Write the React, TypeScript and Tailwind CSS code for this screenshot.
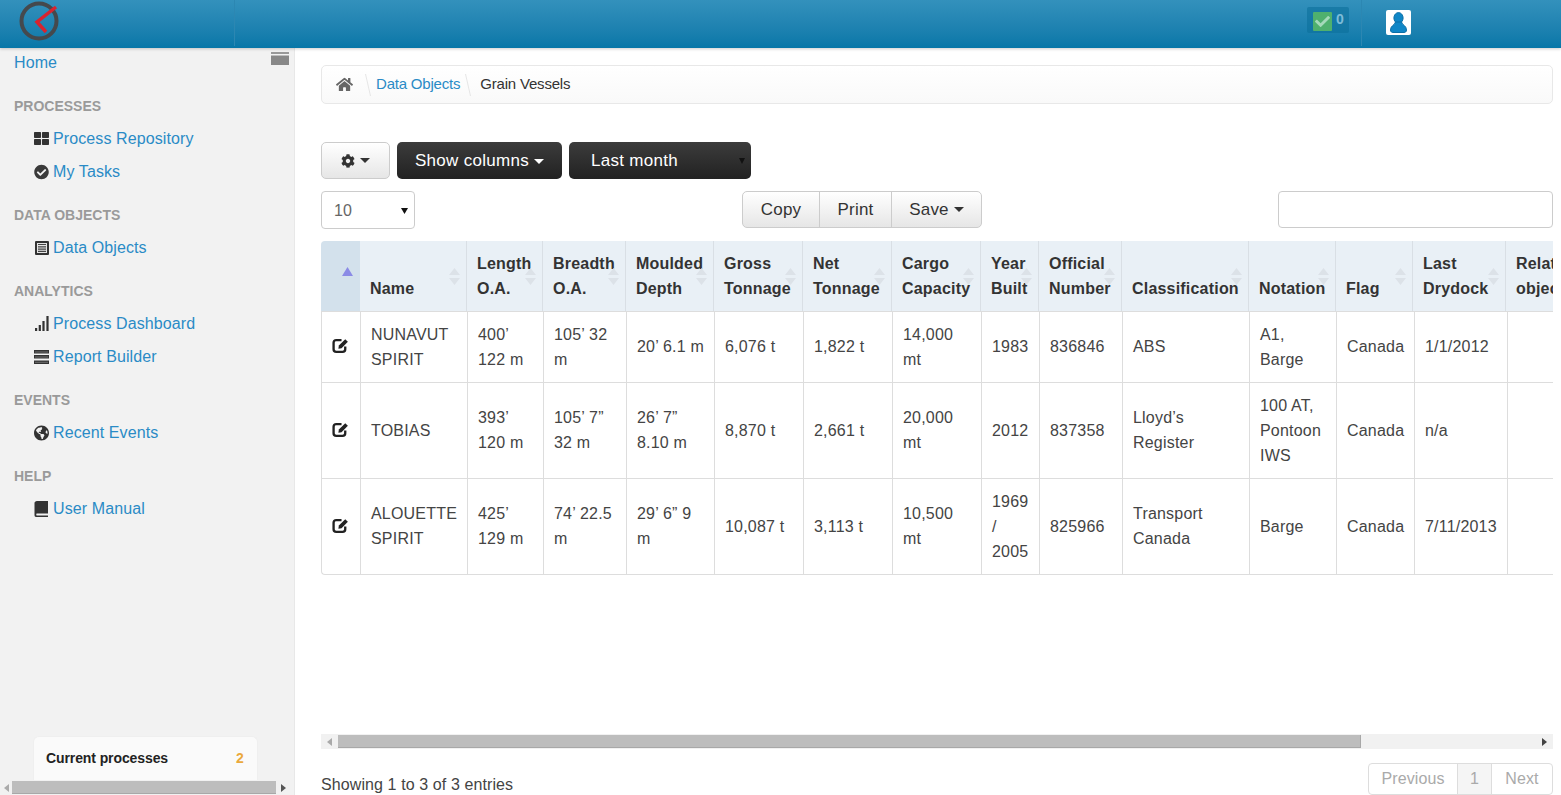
import React from "react";
import { FaThLarge, FaCheckCircle, FaGlobeAmericas, FaHome, FaCog, FaCheck } from "react-icons/fa";

const headWidths = [39, 106, 76, 83, 88, 89, 89, 89, 58, 83, 127, 87, 77, 93, 120];
const bodyWidths = [39, 107, 76, 83, 88, 89, 89, 89, 58, 83, 127, 87, 78, 93, 120];
const heads = ["Name", "Length\nO.A.", "Breadth\nO.A.", "Moulded\nDepth", "Gross\nTonnage", "Net\nTonnage", "Cargo\nCapacity", "Year\nBuilt", "Official\nNumber", "Classification", "Notation", "Flag", "Last\nDrydock", "Related\nobjects"];
const rows = [
  { h: "h-[71px]", c: ["NUNAVUT\nSPIRIT", "400’\n122 m", "105’ 32\nm", "20’ 6.1 m", "6,076 t", "1,822 t", "14,000\nmt", "1983", "836846", "ABS", "A1,\nBarge", "Canada", "1/1/2012", ""] },
  { h: "h-[96px]", c: ["TOBIAS", "393’\n120 m", "105’ 7”\n32 m", "26’ 7”\n8.10 m", "8,870 t", "2,661 t", "20,000\nmt", "2012", "837358", "Lloyd’s\nRegister", "100 AT,\nPontoon\nIWS", "Canada", "n/a", ""] },
  { h: "h-[97px]", c: ["ALOUETTE\nSPIRIT", "425’\n129 m", "74’ 22.5\nm", "29’ 6” 9\nm", "10,087 t", "3,113 t", "10,500\nmt", "1969\n/\n2005", "825966", "Transport\nCanada", "Barge", "Canada", "7/11/2013", ""] },
];

function ListAltIcon() {
  return (
    <svg width="14" height="14" viewBox="0 0 14 14">
      <rect width="14" height="14" rx="1" fill="#333" />
      <rect x="2" y="2" width="10" height="10" fill="#e4e4e4" />
      <path d="M3 3.5 H11 M3 5.8 H11 M3 8.1 H11 M3 10.4 H11" stroke="#444" strokeWidth="1.2" />
    </svg>
  );
}
function StackIcon() {
  return (
    <svg width="15" height="14" viewBox="0 0 15 14">
      <path d="M0 0 H15 V3.4 H0 Z M0 5 H15 V8.6 H0 Z M0 10.4 H15 V14 H0 Z" fill="#333" />
      <path d="M1 2 H14 M1 7 H14 M1 12.3 H14" stroke="#999" strokeWidth="0.6" />
    </svg>
  );
}
function BookIcon() {
  return (
    <svg width="15" height="16" viewBox="0 0 15 16">
      <path d="M3 0 H14 V12.5 H3 C2 12.5 2 14.5 3 14.5 H14 V16 H2 C1 16 0.5 15 0.5 14 V2 C0.5 1 1.5 0 3 0 Z" fill="#333" />
    </svg>
  );
}
function EditIcon() {
  return (
    <svg width="18" height="17" viewBox="0 0 17 16" className="inline-block -translate-y-[2px]">
      <path d="M9 3 H4 Q1.5 3 1.5 5.5 V11.5 Q1.5 14 4 14 H10 Q12.5 14 12.5 11.5 V9" fill="none" stroke="#222" strokeWidth="2.2" />
      <path d="M6 11 L6.5 8 L12.5 2 L15 4.5 L9 10.5 Z" fill="#222" />
    </svg>
  );
}

const sections = [
  { t: "PROCESSES", items: [[<FaThLarge />, "Process Repository"], [<FaCheckCircle className="text-[#3a3a3a] text-[16px]" />, "My Tasks"]] },
  { t: "DATA OBJECTS", items: [[<ListAltIcon />, "Data Objects"]] },
  { t: "ANALYTICS", items: [[<svg width="14" height="15" viewBox="0 0 14 15"><path d="M0 12 H2.2 V15 H0 Z M3.7 9 H5.9 V15 H3.7 Z M7.4 5 H9.6 V15 H7.4 Z M11.4 0 H13.6 V15 H11.4 Z" fill="#333" /></svg>, "Process Dashboard"], [<StackIcon />, "Report Builder"]] },
  { t: "EVENTS", items: [[<FaGlobeAmericas className="text-[16px]" />, "Recent Events"]] },
  { t: "HELP", items: [[<BookIcon />, "User Manual"]] },
] as const;

function Sort() {
  return (
    <svg width="11" height="17" viewBox="0 0 11 17" className="absolute right-[6px] top-[27px]">
      <path d="M5.5 0 L11 7 H0 Z M5.5 17 L11 10 H0 Z" fill="#dce2e8" />
    </svg>
  );
}

function Caret({ color = "currentColor" }: { color?: string }) {
  return (
    <svg width="10" height="5" viewBox="0 0 10 5" className="inline-block ml-[5px] align-middle">
      <path d="M0 0 H10 L5 5 Z" fill={color} />
    </svg>
  );
}

function Arrow({ dir, color }: { dir: "l" | "r"; color: string }) {
  return (
    <svg width="5" height="8" viewBox="0 0 5 8">
      <path d={dir === "l" ? "M5 0 V8 L0 4 Z" : "M0 0 V8 L5 4 Z"} fill={color} />
    </svg>
  );
}

function Crumb() {
  return (
    <svg width="6" height="24" viewBox="0 0 6 24" className="shrink-0">
      <path d="M0.5 1 L5.5 23" stroke="#e6e6e6" strokeWidth="1" fill="none" />
    </svg>
  );
}

export default function App() {
  return (
    <div className="h-[795px] overflow-hidden flex flex-col bg-white text-[#444] text-[16px] tracking-[0.1px] font-['Liberation_Sans',Arial,sans-serif]">
      <header className="h-[48px] shrink-0 flex bg-gradient-to-b from-[#3391bc] to-[#0677a8] shadow-[0_1px_3px_rgba(0,0,0,0.2)] z-10">
        <div className="w-[235px] border-r border-[#2c87b2] pl-[19px] pt-[1px] h-[46px]">
          <svg width="42" height="42" viewBox="0 0 42 42">
            <circle cx="20" cy="20" r="17.5" fill="none" stroke="#45494d" strokeWidth="4" />
            <path d="M37 6 L18 21 L27 31" fill="none" stroke="#d9232e" strokeWidth="3.5" />
          </svg>
        </div>
        <div className="flex-1" />
        <div className="w-[42px] h-[26px] mt-[7px] rounded-[2px] bg-[#0c6f9b]/60 flex items-start pl-[6px] pt-[5px]">
          <div className="w-[19px] h-[19px] bg-[#4fb06e] rounded-[1px] flex items-center justify-center text-[#a5d9ba] text-[15px]">
            <FaCheck />
          </div>
          <span className="text-[14px] font-bold text-[#7dbcd9] ml-[4px] leading-[14px]">0</span>
        </div>
        <div className="ml-[12px] border-r border-[#2c87b2] h-[46px] shrink-0" />
        <div className="ml-[24px] mr-[150px] mt-[10px] w-[25px] h-[25px] bg-white rounded-[2px] flex items-center justify-center">
          <svg width="17" height="21" viewBox="0 0 17 21">
            <ellipse cx="8.5" cy="6" rx="4.6" ry="5.4" fill="#0f86c6" stroke="#0b6ea6" strokeWidth="1" />
            <path d="M5.5 10 C5 13 0.5 13.5 0.5 18 C0.5 20 2 20.5 3 20.5 H14 C15 20.5 16.5 20 16.5 18 C16.5 13.5 12 13 11.5 10 Z" fill="#0f86c6" stroke="#0b6ea6" strokeWidth="1" />
          </svg>
        </div>
      </header>

      <div className="flex-1 flex min-h-0">
        <aside className="w-[295px] shrink-0 bg-[#f2f2f2] border-r border-[#e8e8e8] flex flex-col relative">
          <svg width="18" height="13" viewBox="0 0 18 13" className="absolute left-[271px] top-[4px]">
            <rect width="18" height="2" fill="#999" />
            <rect y="3.5" width="18" height="9.5" fill="#888" />
          </svg>
          <a className="pl-[14px] h-[28px] leading-[29px] text-[#2a8bc6]">Home</a>
          <div className="h-[13px]" />
          {sections.map((s) => (
            <div key={s.t} className="mb-[10px]">
              <div className="h-[33px] leading-[35px] pl-[14px] text-[14px] tracking-normal font-bold text-[#9a9a9a]">{s.t}</div>
              {s.items.map(([icon, label]) => (
                <div key={label} className="h-[33px] pl-[34px] flex items-center">
                  <span className="w-[15px] flex justify-center text-[#333] text-[15px]">{icon}</span>
                  <span className="ml-[4px] text-[#2a8bc6]">{label}</span>
                </div>
              ))}
            </div>
          ))}
          <div className="mt-auto ml-[33px] mr-[36px] h-[44px] bg-[#fafafa] border border-b-0 border-[#efefef] rounded-t-[6px] flex justify-between items-center pl-[12px] pr-[13px]">
            <span className="text-[14px] font-bold tracking-[-0.1px] text-[#222]">Current processes</span>
            <span className="text-[14px] font-bold text-[#eaa93c]">2</span>
          </div>
          <div className="h-[15px] w-[290px] bg-[#f1f1f1] flex items-center">
            <span className="w-[12px] flex justify-center"><Arrow dir="l" color="#aaa" /></span>
            <div className="w-[264px] h-[13px] bg-[#bdbdbd] border-b border-[#a8a8a8]" />
            <span className="flex-1 flex justify-center"><Arrow dir="r" color="#555" /></span>
          </div>
        </aside>

        <main className="flex-1 min-w-0 pl-[26px] pr-[8px] flex flex-col">
          <div className="mt-[17px] h-[39px] shrink-0 border border-[#e8e8e8] rounded-[5px] bg-gradient-to-b from-white to-[#f9f9f9] flex items-center pl-[14px] text-[15px] tracking-[-0.2px]">
            <FaHome className="text-[#666] text-[17px] w-[17px]" />
            <span className="ml-[12px]"><Crumb /></span>
            <a className="ml-[5px] text-[#2a8bc6]">Data Objects</a>
            <span className="ml-[5px]"><Crumb /></span>
            <span className="ml-[9px] text-[#333]">Grain Vessels</span>
          </div>

          <div className="mt-[38px] flex shrink-0 h-[37px] text-[17px] tracking-[0.3px]">
            <button className="w-[69px] rounded-[5px] border border-[#ccc] bg-gradient-to-b from-white to-[#e6e6e6] text-[#333] flex items-center justify-center text-[14px]">
              <FaCog /><Caret />
            </button>
            <button className="ml-[7px] w-[165px] rounded-[5px] bg-gradient-to-b from-[#3c3c3c] to-[#222] text-white text-center">
              Show columns<Caret />
            </button>
            <div className="ml-[7px] w-[182px] rounded-[5px] bg-gradient-to-b from-[#3c3c3c] to-[#222] text-white pl-[22px] leading-[37px] relative">
              Last month
              <svg width="6" height="6" viewBox="0 0 6 6" className="absolute right-[6px] top-[16px]"><path d="M0 0 H6 L3 6 Z" fill="#111" /></svg>
            </div>
          </div>

          <div className="mt-[12px] flex shrink-0 h-[38px]">
            <div className="w-[94px] border border-[#ccc] rounded-[4px] relative pl-[12px] leading-[38px] text-[#666]">
              10
              <svg width="7" height="6" viewBox="0 0 7 6" className="absolute right-[6px] top-[16px]"><path d="M0 0 H7 L3.5 6 Z" fill="#111" /></svg>
            </div>
            <div className="ml-[327px] h-[37px] flex rounded-[5px] border border-[#ccc] bg-gradient-to-b from-white to-[#e6e6e6] text-[#333] text-[17px] tracking-[0.2px]">
              <span className="w-[77px] flex items-center justify-center border-r border-[#ccc]">Copy</span>
              <span className="w-[72px] flex items-center justify-center border-r border-[#ccc]">Print</span>
              <span className="w-[89px] flex items-center justify-center">Save<Caret /></span>
            </div>
            <input className="ml-auto w-[275px] h-[37px] border border-[#ccc] rounded-[4px] bg-white" />
          </div>

          <div className="mt-[12px] shrink-0 overflow-hidden tracking-[0.2px]">
            <table className="table-fixed border-separate border-spacing-0 w-[1287px]">
              <colgroup>{headWidths.map((w, i) => <col key={i} style={{ width: w }} />)}</colgroup>
              <thead>
                <tr className="h-[70px]">
                  <th className="bg-[#d3e1ec] rounded-tl-[4px] relative">
                    <svg width="11" height="9" viewBox="0 0 11 9" className="absolute left-[21px] top-[26px]"><path d="M5.5 0 L11 9 H0 Z" fill="#8b8be6" /></svg>
                  </th>
                  {heads.map((h, i) => (
                    <th key={h} className={`relative bg-[#e9f0f6] align-bottom text-left pl-[10px] pb-[10px] leading-[25px] font-bold text-[#333] whitespace-pre-line ${i === 0 ? "" : "border-l border-[#d9dfe5]"}`}>
                      {h}
                      <Sort />
                    </th>
                  ))}
                </tr>
              </thead>
            </table>
            <table className="table-fixed border-separate border-spacing-0 w-[1288px]">
              <colgroup>{bodyWidths.map((w, i) => <col key={i} style={{ width: w }} />)}</colgroup>
              <tbody>
                {rows.map((r, ri) => (
                  <tr key={ri} className={r.h}>
                    <td className={`border-t border-l border-[#ddd] text-center ${ri === 2 ? "border-b rounded-bl-[4px]" : ""}`}>
                      <EditIcon />
                    </td>
                    {r.c.map((c, i) => (
                      <td key={i} className={`border-t border-l border-[#ddd] pl-[10px] pb-[1px] leading-[25px] text-[#444] whitespace-pre-line ${ri === 2 ? "border-b" : ""}`}>{c}</td>
                    ))}
                    <td className={`border-t border-l border-[#ddd] ${ri === 2 ? "border-b" : ""}`} />
                  </tr>
                ))}
              </tbody>
            </table>
          </div>

          <div className="mt-[159px] shrink-0 h-[15px] bg-[#f1f1f1] flex items-center">
            <span className="w-[17px] flex justify-center"><Arrow dir="l" color="#aaa" /></span>
            <div className="w-[1023px] h-[13px] bg-[#bdbdbd] border-r border-b border-[#a8a8a8]" />
            <span className="ml-auto w-[17px] flex justify-center"><Arrow dir="r" color="#444" /></span>
          </div>

          <div className="mt-[14px] flex justify-between shrink-0">
            <span className="mt-[10px] leading-[24px]">Showing 1 to 3 of 3 entries</span>
            <div className="h-[32px] flex border border-[#ddd] rounded-[4px] text-[#aaa]">
              <span className="w-[88px] flex items-center justify-center">Previous</span>
              <span className="w-[35px] flex items-center justify-center bg-[#f5f5f5] border-x border-[#ddd]">1</span>
              <span className="w-[60px] flex items-center justify-center">Next</span>
            </div>
          </div>
        </main>
      </div>
    </div>
  );
}
